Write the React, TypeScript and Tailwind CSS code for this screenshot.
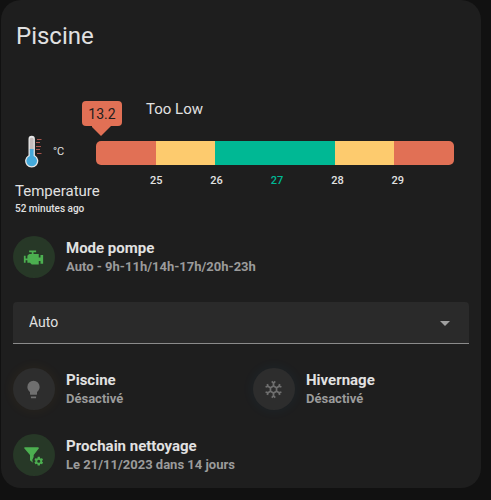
import { useState } from "react";
import type { ReactNode } from "react";

interface IEntityProps {
  name: string;
  state: string;
  iconClass: string;
  children: ReactNode;
}

const segments = [
  { id: "low", className: "flex-1 bg-[#e17055]" },
  { id: "mid-low", className: "flex-1 bg-[#fdcb6e]" },
  { id: "ok", className: "flex-2 bg-[#00b894]" },
  { id: "mid-high", className: "flex-1 bg-[#fdcb6e]" },
  { id: "high", className: "flex-1 bg-[#e17055]" },
];

const labels = [25, 26, 27, 28, 29];
const target = 27;

const modes = ["Auto", "Manuel", "Arrêt"];

const Thermometer = () => (
  <svg viewBox="0 0 32 34" className="h-[34px] w-8" aria-hidden="true">
    <path
      d="M11.5 4a3.2 3.2 0 0 1 6.4 0V20.2a6.6 6.6 0 1 1-6.4 0Z"
      fill="#e6e6e6"
    />
    <rect x="12.8" y="2.8" width="3.8" height="13" rx="1.6" fill="#c4bcbc" />
    <path d="M12.8 14h3.8v7a5.3 5.3 0 1 1-3.8 0Z" fill="#45aadb" />
    <path
      d="M20 4.5h4.5M19 7.5h4M19 11.5h5M19 14.5h4M20 18.5h4.5"
      stroke="#a9544c"
      strokeWidth="1"
    />
  </svg>
);

const Entity = ({ name, state, iconClass, children }: IEntityProps) => (
  <div className="flex items-center gap-[11px]">
    <div
      className={
        "flex h-[42px] w-[42px] shrink-0 items-center justify-center rounded-full pr-px " +
        iconClass
      }
    >
      <svg viewBox="0 0 24 24" fill="currentColor" className="h-[21px] w-[21px]" aria-hidden="true">
        {children}
      </svg>
    </div>
    <div className="font-bold whitespace-nowrap">
      <p className="text-[15px] leading-5 text-[#e1e1e1]">{name}</p>
      <p className="text-[13px] leading-[18px] text-[#9b9b9b]">{state}</p>
    </div>
  </div>
);

const App = () => {
  const [mode, setMode] = useState<string>("Auto");

  return (
    <main className="min-h-screen bg-[#111111] pr-[10px] pl-px font-['Roboto',sans-serif] text-[#e1e1e1]">
      <div className="rounded-[20px] bg-[#1e1e1e] px-3 pt-3 pb-3">
        <h1 className="pl-[3px] text-2xl leading-[48px]">Piscine</h1>

        <section className="mt-[41px] flex">
          <div className="w-[83px] shrink-0 pt-[34px] whitespace-nowrap">
            <div className="flex items-center gap-1 pl-1">
              <Thermometer />
              <span className="text-[11px]">°C</span>
            </div>
            <p className="mt-3 pl-[2px] text-[15px] leading-5">Temperature</p>
            <p className="pl-[2px] text-[10px] leading-4 font-medium">52 minutes ago</p>
          </div>

          <div className="mr-[15px] flex-1">
            <div className="-ml-[14px] flex h-10 items-start gap-6">
              <div className="flex flex-col items-center">
                <div className="flex h-[25px] w-10 items-center justify-center rounded bg-[#e17055] text-sm text-[#1e1e1e]">
                  13.2
                </div>
                <svg viewBox="0 0 20 10" className="h-[10px] w-5" aria-hidden="true">
                  <path d="M-1 0H19L9 10Z" fill="#e17055" />
                </svg>
              </div>
              <p className="text-[15px] leading-4">Too Low</p>
            </div>
            <div className="flex h-6 overflow-hidden rounded-[5px]">
              {segments.map((segment) => (
                <div key={segment.id} className={segment.className} />
              ))}
            </div>
            <div className="mt-2 mr-[26px] ml-[30px] flex text-center text-[11px] leading-4 font-medium">
              {labels.map((value) => (
                <span
                  key={value}
                  className={value === target ? "flex-1 text-[#00b894]" : "flex-1"}
                >
                  {value}
                </span>
              ))}
            </div>
          </div>
        </section>

        <div className="mt-[19px]">
          <Entity
            name="Mode pompe"
            state="Auto - 9h-11h/14h-17h/20h-23h"
            iconClass="bg-[#273827] text-[#4caf50]"
          >
            <path d="M7,4V6H10V8H7L5,10V13H3V10H1V18H3V15H5V18H8L10,20H18V16H20V19H23V9H20V12H18V8H12V6H15V4H7Z" />
          </Entity>
        </div>

        <div className="relative mt-6">
          <select
            aria-label="Mode pompe"
            value={mode}
            onChange={(e) => setMode(e.target.value)}
            className="block h-[42px] w-full appearance-none rounded-t border-b border-[#8b8b8b] bg-[#2a2a2a] px-4 pb-[2px] text-sm text-[#e1e1e1]"
          >
            {modes.map((item) => (
              <option key={item}>{item}</option>
            ))}
          </select>
          <svg
            viewBox="0 0 10 5"
            className="pointer-events-none absolute top-[19px] right-[19px] h-[5px] w-[10px]"
            aria-hidden="true"
          >
            <path d="M0 0H10L5 5Z" fill="#a0a0a0" />
          </svg>
        </div>

        <div className="mt-6 grid grid-cols-2 gap-6">
          <Entity
            name="Piscine"
            state="Désactivé"
            iconClass="bg-[#2d2d2d] text-[#6f6f6f] shadow-[0_0_10px_4px_#ff980008]"
          >
            <path d="M12,2A7,7 0 0,0 5,9C5,11.38 6.19,13.47 8,14.74V17A1,1 0 0,0 9,18H15A1,1 0 0,0 16,17V14.74C17.81,13.47 19,11.38 19,9A7,7 0 0,0 12,2M9,21A1,1 0 0,0 10,22H14A1,1 0 0,0 15,21V20H9V21Z" />
          </Entity>
          <Entity
            name="Hivernage"
            state="Désactivé"
            iconClass="bg-[#2d2d2d] text-[#6f6f6f] shadow-[0_0_10px_4px_#2196f308]"
          >
            <path d="M20.79,13.95L18.46,14.57L16.46,13.44V10.56L18.46,9.43L20.79,10.05L21.31,8.12L19.54,7.65L20,5.88L18.07,5.36L17.45,7.69L15.45,8.82L13,7.38V5.12L14.71,3.41L13.29,2L12,3.29L10.71,2L9.29,3.41L11,5.12V7.38L8.5,8.82L6.5,7.69L5.92,5.36L4,5.88L4.47,7.65L2.7,8.12L3.22,10.05L5.55,9.43L7.55,10.56V13.45L5.55,14.58L3.22,13.96L2.7,15.89L4.47,16.36L4,18.12L5.93,18.64L6.55,16.31L8.55,15.18L11,16.62V18.88L9.29,20.59L10.71,22L12,20.71L13.29,22L14.7,20.59L13,18.88V16.62L15.5,15.17L17.5,16.3L18.12,18.63L20,18.12L19.53,16.35L21.3,15.88L20.79,13.95M9.5,10.56L12,9.11L14.5,10.56V13.44L12,14.89L9.5,13.44V10.56Z" />
          </Entity>
          <Entity
            name="Prochain nettoyage"
            state="Le 21/11/2023 dans 14 jours"
            iconClass="bg-[#273827] text-[#4caf50]"
          >
            <path d="M2.2 2.5H17.2A1 1 0 0 1 18 4.1L12.2 11.4V13.6A6.5 6.5 0 0 0 11.3 20.2L8.3 17.6A1 1 0 0 1 8 16.8V11.4L1.6 4.1A1 1 0 0 1 2.2 2.5Z" />
            <path
              transform="translate(12 12.5) scale(.5)"
              d="M12,15.5A3.5,3.5 0 0,1 8.5,12A3.5,3.5 0 0,1 12,8.5A3.5,3.5 0 0,1 15.5,12A3.5,3.5 0 0,1 12,15.5M19.43,12.97C19.47,12.65 19.5,12.33 19.5,12C19.5,11.67 19.47,11.34 19.43,11L21.54,9.37C21.73,9.22 21.78,8.95 21.66,8.73L19.66,5.27C19.54,5.05 19.27,4.96 19.05,5.05L16.56,6.05C16.04,5.66 15.5,5.32 14.87,5.07L14.5,2.42C14.46,2.18 14.25,2 14,2H10C9.75,2 9.54,2.18 9.5,2.42L9.13,5.07C8.5,5.32 7.96,5.66 7.44,6.05L4.95,5.05C4.73,4.96 4.46,5.05 4.34,5.27L2.34,8.73C2.21,8.95 2.27,9.22 2.46,9.37L4.57,11C4.53,11.34 4.5,11.67 4.5,12C4.5,12.33 4.53,12.65 4.57,12.97L2.46,14.63C2.27,14.78 2.21,15.05 2.34,15.27L4.34,18.73C4.46,18.95 4.73,19.03 4.95,18.95L7.44,17.94C7.96,18.34 8.5,18.68 9.13,18.93L9.5,21.58C9.54,21.82 9.75,22 10,22H14C14.25,22 14.46,21.82 14.5,21.58L14.87,18.93C15.5,18.67 16.04,18.34 16.56,17.94L19.05,18.95C19.27,19.03 19.54,18.95 19.66,18.73L21.66,15.27C21.78,15.05 21.73,14.78 21.54,14.63L19.43,12.97Z"
            />
          </Entity>
        </div>
      </div>
    </main>
  );
};
export default App;
